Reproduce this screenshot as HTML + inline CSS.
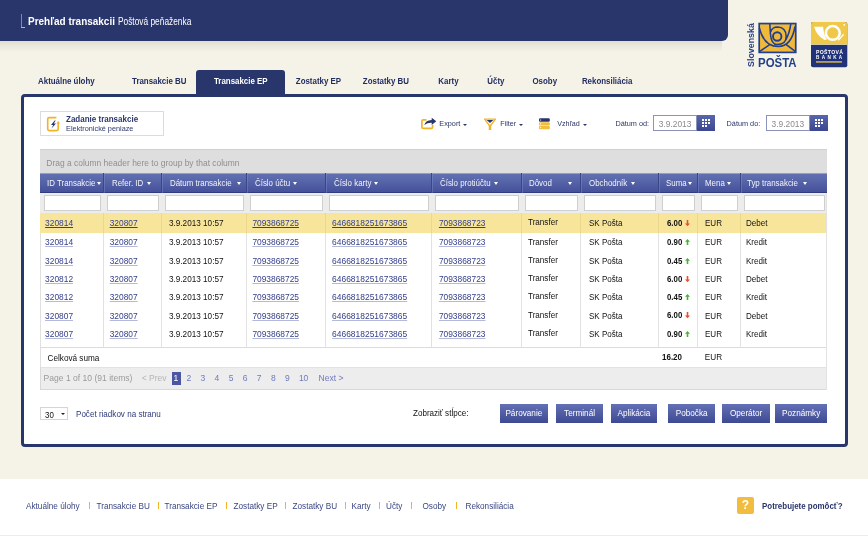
<!DOCTYPE html>
<html><head><meta charset="utf-8"><style>
*{box-sizing:border-box;margin:0;padding:0}
html,body{width:868px;height:536px;overflow:hidden}
body{background:#f5f2e8;font-family:"Liberation Sans",sans-serif;position:relative;color:#222}
.a{position:absolute;white-space:nowrap}
.tab{position:absolute;top:70px;height:25px;padding-top:6px;line-height:12px;font-size:8.1px;font-weight:bold;color:#222d60;text-align:center}
.tab.act{background:#29366b;color:#fff;border-radius:3px 3px 0 0}
.car{position:absolute;width:0;height:0;border-left:2.7px solid transparent;border-right:2.7px solid transparent;border-top:3.1px solid #fff}
.fin{position:absolute;top:195.2px;height:15.6px;background:#fff;border:1px solid #cfcfcf}
.vl{position:absolute;width:1px;background:#e2e2e2}
u{text-decoration:underline;text-decoration-color:#b3b9d6;text-decoration-thickness:1.25px;text-underline-offset:1px}
.btn{position:absolute;top:404.1px;height:18.8px;padding-top:4px;line-height:12px;background:linear-gradient(#6470b4,#3d4a92);color:#fff;font-size:8.2px;text-align:center}
.fl{position:absolute;top:501px;line-height:12px;font-size:8.2px;color:#3a4682}
.fs{position:absolute;top:501.6px;width:1px;height:7.4px;background:#f0b429}
</style></head>
<body><div id="root" style="position:absolute;left:0;top:0;width:868px;height:536px;overflow:hidden;will-change:transform">
<div class="a" style="left:0;top:41px;width:722px;height:11px;background:linear-gradient(rgba(95,90,65,0.14),rgba(95,90,65,0.07) 40%,rgba(95,90,65,0))"></div>
<div class="a" style="left:0;top:0;width:728px;height:41px;background:#29366b;border-bottom-right-radius:6px;"></div>
<div class="a" style="left:21px;top:14px;width:1.3px;height:14px;background:#8a8a80"></div>
<div class="a" style="left:21px;top:27.2px;width:4px;height:1.2px;background:#e8b830"></div>
<div class="a" style="left:27.7px;top:14.85px;line-height:12px;font-size:10.75px;font-weight:bold;color:#fff;transform-origin:0 50%;transform:scaleX(0.927)">Prehľad transakcii</div>
<div class="a" style="left:117.9px;top:14.85px;line-height:12px;font-size:10.75px;color:#fff;transform-origin:0 50%;transform:scaleX(0.776)">Poštová peňaženka</div>
<div class="tab" style="left:23px;width:86px;font-size:8.2px"><span style="display:inline-block;transform:scaleX(0.965)">Aktuálne úlohy</span></div>
<div class="tab" style="left:116px;width:86px;font-size:8.2px"><span style="display:inline-block;transform:scaleX(0.965)">Transakcie BU</span></div>
<div class="tab act" style="left:196px;width:89px;font-size:8.2px"><span style="display:inline-block;transform:scaleX(0.965)">Transakcie EP</span></div>
<div class="tab" style="left:285px;width:67px;font-size:8.2px"><span style="display:inline-block;transform:scaleX(0.965)">Zostatky EP</span></div>
<div class="tab" style="left:352px;width:68px;font-size:8.2px"><span style="display:inline-block;transform:scaleX(0.965)">Zostatky BU</span></div>
<div class="tab" style="left:428px;width:41px;font-size:8.2px"><span style="display:inline-block;transform:scaleX(0.965)">Karty</span></div>
<div class="tab" style="left:476px;width:40px;font-size:8.2px"><span style="display:inline-block;transform:scaleX(0.965)">Účty</span></div>
<div class="tab" style="left:524px;width:41px;font-size:8.2px"><span style="display:inline-block;transform:scaleX(0.965)">Osoby</span></div>
<div class="tab" style="left:574px;width:67px;font-size:8.2px"><span style="display:inline-block;transform:scaleX(0.965)">Rekonsiliácia</span></div>
<div class="a" style="left:21px;top:94px;width:827px;height:353px;border:3px solid #29366b;border-radius:4px;background:#fff"></div>
<div class="a" style="left:40.3px;top:111.1px;width:123.5px;height:25.3px;border:1px solid #dcdcdc;background:#fff"></div>
<svg class="a" style="left:45px;top:114.5px" width="18" height="18" viewBox="0 0 18 18">
<path d="M11.4 2.6 H4.2 Q2.7 2.6 2.7 4.1 V14.1 Q2.7 15.6 4.2 15.6 H11.7 Q13.2 15.6 13.2 14.1 V8" fill="none" stroke="#f0b429" stroke-width="1.6"/>
<path d="M13.2 5.9 L15.1 8.6 H11.3 Z" fill="#f0b429"/>
<path d="M9.7 5.5 L6 10.1 H8.2 L6.5 13.4 L11 8.6 H8.8 L10.7 5.5 Z" fill="#29366b"/>
</svg>
<div class="a" style="left:66.10px;top:114.00px;line-height:12px;font-size:8.2px;color:#29366b;font-weight:bold;transform-origin:0 50%;transform:scaleX(0.978);">Zadanie transakcie</div>
<div class="a" style="left:66.10px;top:123.00px;line-height:12px;font-size:7.3px;color:#2c3870;">Elektronické peniaze</div>
<svg class="a" style="left:419.5px;top:117px" width="18" height="13" viewBox="0 0 18 13">
<path d="M6.5 2.85 H3.3 Q1.85 2.85 1.85 4.3 V9.9 Q1.85 11.35 3.3 11.35 H11.2 Q12.65 11.35 12.65 9.9 V7.9" fill="none" stroke="#f0b429" stroke-width="1.7"/>
<path d="M4.3 7.9 Q5.5 3.1 11.7 2.9 V0.8 L16.3 4.3 L11.7 7.9 V5.7 Q7.5 5.5 4.3 7.9 Z" fill="#29366b"/>
</svg>
<div class="a" style="left:439.30px;top:118.00px;line-height:12px;font-size:7.3px;color:#2a3568;">Export</div>
<div class="car" style="left:463px;top:123.5px;border-top-color:#2a3568;border-left-width:2px;border-right-width:2px;border-top-width:2.5px"></div>
<svg class="a" style="left:483px;top:117.5px" width="14" height="13" viewBox="0 0 14 13">
<path d="M1.6 1.1 H12.4 L7 8.2 Z" fill="#fff" stroke="#f0b429" stroke-width="1.45" stroke-linejoin="round"/>
<path d="M7 7.2 V12" stroke="#f0b429" stroke-width="2.5"/>
<path d="M3.6 1.9 H10.4 L7 4.9 Z" fill="#29366b"/>
</svg>
<div class="a" style="left:500.30px;top:118.00px;line-height:12px;font-size:7.1px;color:#2a3568;">Filter</div>
<div class="car" style="left:518.8px;top:123.5px;border-top-color:#2a3568;border-left-width:2px;border-right-width:2px;border-top-width:2.5px"></div>
<svg class="a" style="left:539px;top:118px" width="11" height="12" viewBox="0 0 11 12">
<rect x="0" y="0.2" width="10.8" height="3.5" rx="1.2" fill="#26336e"/>
<rect x="0" y="4.3" width="10.8" height="3.2" rx="0.8" fill="#f1bd3f"/>
<rect x="0" y="8.0" width="10.8" height="3.2" rx="0.8" fill="#f1bd3f"/>
<circle cx="1.6" cy="2" r="0.6" fill="#fff"/><circle cx="1.6" cy="5.9" r="0.6" fill="#fff"/><circle cx="1.6" cy="9.6" r="0.6" fill="#fff"/>
</svg>
<div class="a" style="left:557.20px;top:118.00px;line-height:12px;font-size:7.2px;color:#2a3568;">Vzhľad</div>
<div class="car" style="left:583px;top:123.5px;border-top-color:#2a3568;border-left-width:2px;border-right-width:2px;border-top-width:2.5px"></div>
<div class="a" style="left:615.40px;top:118.00px;line-height:12px;font-size:7.3px;color:#2a3568;">Dátum od:</div>
<div class="a" style="left:653.4px;top:114.9px;width:44px;height:16.3px;border:1px solid #8c93b8;background:#fff"></div>
<div class="a" style="left:658.80px;top:118.00px;line-height:12px;font-size:8.4px;color:#8a8a8a;">3.9.2013</div>
<div class="a" style="left:697.4px;top:114.9px;width:17.5px;height:16.3px;background:linear-gradient(#5866ad,#3b4790)"></div>
<svg class="a" style="left:702.20px;top:119.10px" width="8" height="8" viewBox="0 0 8 8"><rect x="0.0" y="0.0" width="2" height="2" fill="#fff"/><rect x="3.0" y="0.0" width="2" height="2" fill="#fff"/><rect x="6.0" y="0.0" width="2" height="2" fill="#fff"/><rect x="0.0" y="3.0" width="2" height="2" fill="#fff"/><rect x="3.0" y="3.0" width="2" height="2" fill="#fff"/><rect x="6.0" y="3.0" width="2" height="2" fill="#fff"/><rect x="0.0" y="6.0" width="2" height="2" fill="#fff"/><rect x="3.0" y="6.0" width="2" height="2" fill="#fff"/></svg>
<div class="a" style="left:726.60px;top:118.00px;line-height:12px;font-size:7.3px;color:#2a3568;">Dátum do:</div>
<div class="a" style="left:766.1px;top:114.9px;width:44px;height:16.3px;border:1px solid #8c93b8;background:#fff"></div>
<div class="a" style="left:771.50px;top:118.00px;line-height:12px;font-size:8.4px;color:#8a8a8a;">3.9.2013</div>
<div class="a" style="left:810.1px;top:114.9px;width:17.5px;height:16.3px;background:linear-gradient(#5866ad,#3b4790)"></div>
<svg class="a" style="left:814.90px;top:119.10px" width="8" height="8" viewBox="0 0 8 8"><rect x="0.0" y="0.0" width="2" height="2" fill="#fff"/><rect x="3.0" y="0.0" width="2" height="2" fill="#fff"/><rect x="6.0" y="0.0" width="2" height="2" fill="#fff"/><rect x="0.0" y="3.0" width="2" height="2" fill="#fff"/><rect x="3.0" y="3.0" width="2" height="2" fill="#fff"/><rect x="6.0" y="3.0" width="2" height="2" fill="#fff"/><rect x="0.0" y="6.0" width="2" height="2" fill="#fff"/><rect x="3.0" y="6.0" width="2" height="2" fill="#fff"/></svg>
<div class="a" style="left:40.3px;top:149.3px;width:786.7px;height:24px;background:#dedede;border-top:1px solid #d0d0d0"></div>
<div class="a" style="left:46.30px;top:157.00px;line-height:12px;font-size:8.45px;color:#8f8f8f;">Drag a column header here to group by that column</div>
<div class="a" style="left:40.3px;top:173.2px;width:786.7px;height:19.4px;background:linear-gradient(#6270b3,#45529a);border-top:1px solid #8e9dd2;border-bottom:1px solid #303c82"></div>
<div class="a" style="left:102.90px;top:173.2px;width:1px;height:19.8px;background:#3a4688"></div>
<div class="a" style="left:103.90px;top:173.2px;width:1px;height:19.8px;background:rgba(140,155,215,0.35)"></div>
<div class="a" style="left:160.90px;top:173.2px;width:1px;height:19.8px;background:#3a4688"></div>
<div class="a" style="left:161.90px;top:173.2px;width:1px;height:19.8px;background:rgba(140,155,215,0.35)"></div>
<div class="a" style="left:245.90px;top:173.2px;width:1px;height:19.8px;background:#3a4688"></div>
<div class="a" style="left:246.90px;top:173.2px;width:1px;height:19.8px;background:rgba(140,155,215,0.35)"></div>
<div class="a" style="left:324.90px;top:173.2px;width:1px;height:19.8px;background:#3a4688"></div>
<div class="a" style="left:325.90px;top:173.2px;width:1px;height:19.8px;background:rgba(140,155,215,0.35)"></div>
<div class="a" style="left:431.40px;top:173.2px;width:1px;height:19.8px;background:#3a4688"></div>
<div class="a" style="left:432.40px;top:173.2px;width:1px;height:19.8px;background:rgba(140,155,215,0.35)"></div>
<div class="a" style="left:520.90px;top:173.2px;width:1px;height:19.8px;background:#3a4688"></div>
<div class="a" style="left:521.90px;top:173.2px;width:1px;height:19.8px;background:rgba(140,155,215,0.35)"></div>
<div class="a" style="left:580.00px;top:173.2px;width:1px;height:19.8px;background:#3a4688"></div>
<div class="a" style="left:581.00px;top:173.2px;width:1px;height:19.8px;background:rgba(140,155,215,0.35)"></div>
<div class="a" style="left:658.00px;top:173.2px;width:1px;height:19.8px;background:#3a4688"></div>
<div class="a" style="left:659.00px;top:173.2px;width:1px;height:19.8px;background:rgba(140,155,215,0.35)"></div>
<div class="a" style="left:697.00px;top:173.2px;width:1px;height:19.8px;background:#3a4688"></div>
<div class="a" style="left:698.00px;top:173.2px;width:1px;height:19.8px;background:rgba(140,155,215,0.35)"></div>
<div class="a" style="left:740.00px;top:173.2px;width:1px;height:19.8px;background:#3a4688"></div>
<div class="a" style="left:741.00px;top:173.2px;width:1px;height:19.8px;background:rgba(140,155,215,0.35)"></div>
<div class="a" style="left:46.50px;top:178.00px;line-height:12px;font-size:8.2px;color:#f2f3fa;transform-origin:0 50%;transform:scaleX(0.966);">ID Transakcie</div>
<div class="car" style="left:97.3px;top:182px"></div>
<div class="a" style="left:111.90px;top:178.00px;line-height:12px;font-size:8.2px;color:#f2f3fa;transform-origin:0 50%;transform:scaleX(0.966);">Refer. ID</div>
<div class="car" style="left:146.5px;top:182px"></div>
<div class="a" style="left:170.00px;top:178.00px;line-height:12px;font-size:8.2px;color:#f2f3fa;transform-origin:0 50%;transform:scaleX(0.966);">Dátum transakcie</div>
<div class="car" style="left:236.5px;top:182px"></div>
<div class="a" style="left:254.50px;top:178.00px;line-height:12px;font-size:8.2px;color:#f2f3fa;transform-origin:0 50%;transform:scaleX(0.966);">Číslo účtu</div>
<div class="car" style="left:292.7px;top:182px"></div>
<div class="a" style="left:333.90px;top:178.00px;line-height:12px;font-size:8.2px;color:#f2f3fa;transform-origin:0 50%;transform:scaleX(0.966);">Číslo karty</div>
<div class="car" style="left:374.3px;top:182px"></div>
<div class="a" style="left:440.00px;top:178.00px;line-height:12px;font-size:8.2px;color:#f2f3fa;transform-origin:0 50%;transform:scaleX(0.966);">Číslo protiúčtu</div>
<div class="car" style="left:494.4px;top:182px"></div>
<div class="a" style="left:528.80px;top:178.00px;line-height:12px;font-size:8.2px;color:#f2f3fa;transform-origin:0 50%;transform:scaleX(0.966);">Dôvod</div>
<div class="car" style="left:568.2px;top:182px"></div>
<div class="a" style="left:589.30px;top:178.00px;line-height:12px;font-size:8.2px;color:#f2f3fa;transform-origin:0 50%;transform:scaleX(0.966);">Obchodník</div>
<div class="car" style="left:631.1px;top:182px"></div>
<div class="a" style="left:666.10px;top:178.00px;line-height:12px;font-size:8.2px;color:#f2f3fa;transform-origin:0 50%;transform:scaleX(0.966);">Suma</div>
<div class="car" style="left:688.4px;top:182px"></div>
<div class="a" style="left:704.60px;top:178.00px;line-height:12px;font-size:8.2px;color:#f2f3fa;transform-origin:0 50%;transform:scaleX(0.966);">Mena</div>
<div class="car" style="left:727.1px;top:182px"></div>
<div class="a" style="left:747.20px;top:178.00px;line-height:12px;font-size:8.2px;color:#f2f3fa;transform-origin:0 50%;transform:scaleX(0.966);">Typ transakcie</div>
<div class="car" style="left:802.6px;top:182px"></div>
<div class="a" style="left:40.3px;top:193px;width:786.7px;height:20px;background:#ececec"></div>
<div class="fin" style="left:44.20px;width:56.70px"></div>
<div class="fin" style="left:106.90px;width:52.00px"></div>
<div class="fin" style="left:164.90px;width:79.00px"></div>
<div class="fin" style="left:249.90px;width:73.00px"></div>
<div class="fin" style="left:328.90px;width:100.50px"></div>
<div class="fin" style="left:435.40px;width:83.50px"></div>
<div class="fin" style="left:524.90px;width:53.10px"></div>
<div class="fin" style="left:584.00px;width:72.00px"></div>
<div class="fin" style="left:662.00px;width:33.00px"></div>
<div class="fin" style="left:701.00px;width:37.00px"></div>
<div class="fin" style="left:744.00px;width:80.50px"></div>
<div class="a" style="left:40.3px;top:213px;width:786.7px;height:134.2px;background:#fff;border-left:1px solid #e0e0e0"></div>
<div class="a" style="left:40.3px;top:213px;width:786.7px;height:19.5px;background:#f8e59c"></div>
<div class="vl" style="left:102.90px;top:213px;height:134.2px"></div>
<div class="vl" style="left:102.90px;top:213px;height:19.5px;background:#ecd88a"></div>
<div class="vl" style="left:160.90px;top:213px;height:134.2px"></div>
<div class="vl" style="left:160.90px;top:213px;height:19.5px;background:#ecd88a"></div>
<div class="vl" style="left:245.90px;top:213px;height:134.2px"></div>
<div class="vl" style="left:245.90px;top:213px;height:19.5px;background:#ecd88a"></div>
<div class="vl" style="left:324.90px;top:213px;height:134.2px"></div>
<div class="vl" style="left:324.90px;top:213px;height:19.5px;background:#ecd88a"></div>
<div class="vl" style="left:431.40px;top:213px;height:134.2px"></div>
<div class="vl" style="left:431.40px;top:213px;height:19.5px;background:#ecd88a"></div>
<div class="vl" style="left:520.90px;top:213px;height:134.2px"></div>
<div class="vl" style="left:520.90px;top:213px;height:19.5px;background:#ecd88a"></div>
<div class="vl" style="left:580.00px;top:213px;height:134.2px"></div>
<div class="vl" style="left:580.00px;top:213px;height:19.5px;background:#ecd88a"></div>
<div class="vl" style="left:658.00px;top:213px;height:134.2px"></div>
<div class="vl" style="left:658.00px;top:213px;height:19.5px;background:#ecd88a"></div>
<div class="vl" style="left:697.00px;top:213px;height:134.2px"></div>
<div class="vl" style="left:697.00px;top:213px;height:19.5px;background:#ecd88a"></div>
<div class="vl" style="left:740.00px;top:213px;height:134.2px"></div>
<div class="vl" style="left:740.00px;top:213px;height:19.5px;background:#ecd88a"></div>
<div class="a" style="left:40.3px;top:346.7px;width:786.7px;height:1px;background:#dcdcdc"></div>
<div class="a" style="left:45.10px;top:217.00px;line-height:12px;font-size:8.4px;color:#36418a;"><u style="text-decoration-color:#3b4478">320814</u></div>
<div class="a" style="left:109.70px;top:217.00px;line-height:12px;font-size:8.4px;color:#36418a;"><u style="text-decoration-color:#3b4478">320807</u></div>
<div class="a" style="left:168.80px;top:217.00px;line-height:12px;font-size:8.3px;color:#111;transform-origin:0 50%;transform:scaleX(0.984);">3.9.2013 10:57</div>
<div class="a" style="left:252.40px;top:217.00px;line-height:12px;font-size:8.4px;color:#36418a;"><u style="text-decoration-color:#3b4478">7093868725</u></div>
<div class="a" style="left:332.10px;top:217.00px;line-height:12px;font-size:8.45px;color:#36418a;"><u style="text-decoration-color:#3b4478">6466818251673865</u></div>
<div class="a" style="left:438.90px;top:217.00px;line-height:12px;font-size:8.4px;color:#36418a;"><u style="text-decoration-color:#3b4478">7093868723</u></div>
<div class="a" style="left:527.60px;top:216.00px;line-height:12px;font-size:8.3px;color:#111;transform-origin:0 50%;transform:scaleX(0.977);">Transfer</div>
<div class="a" style="left:589.20px;top:217.00px;line-height:12px;font-size:8.3px;color:#111;transform-origin:0 50%;transform:scaleX(0.965);">SK Pošta</div>
<div class="a" style="left:666.50px;top:218.00px;line-height:12px;font-size:8.15px;color:#111;font-weight:bold;transform-origin:0 50%;transform:scaleX(0.965);">6.00</div>
<svg class="a" style="left:685.1px;top:219.90px" width="5" height="6.2" viewBox="0 0 5 6.2"><path d="M1.7 0 H3.3 V3.4 H5 L2.5 6.2 L0 3.4 H1.7 Z" fill="#e0532b"/></svg>
<div class="a" style="left:704.60px;top:217.00px;line-height:12px;font-size:8.3px;color:#111;transform-origin:0 50%;transform:scaleX(0.970);">EUR</div>
<div class="a" style="left:746.00px;top:217.00px;line-height:12px;font-size:8.3px;color:#111;transform-origin:0 50%;transform:scaleX(0.970);">Debet</div>
<div class="a" style="left:45.10px;top:236.00px;line-height:12px;font-size:8.4px;color:#36418a;"><u>320814</u></div>
<div class="a" style="left:109.70px;top:236.00px;line-height:12px;font-size:8.4px;color:#36418a;"><u>320807</u></div>
<div class="a" style="left:168.80px;top:236.00px;line-height:12px;font-size:8.3px;color:#111;transform-origin:0 50%;transform:scaleX(0.984);">3.9.2013 10:57</div>
<div class="a" style="left:252.40px;top:236.00px;line-height:12px;font-size:8.4px;color:#36418a;"><u>7093868725</u></div>
<div class="a" style="left:332.10px;top:236.00px;line-height:12px;font-size:8.45px;color:#36418a;"><u>6466818251673865</u></div>
<div class="a" style="left:438.90px;top:236.00px;line-height:12px;font-size:8.4px;color:#36418a;"><u>7093868723</u></div>
<div class="a" style="left:527.60px;top:236.00px;line-height:12px;font-size:8.3px;color:#111;transform-origin:0 50%;transform:scaleX(0.977);">Transfer</div>
<div class="a" style="left:589.20px;top:236.00px;line-height:12px;font-size:8.3px;color:#111;transform-origin:0 50%;transform:scaleX(0.965);">SK Pošta</div>
<div class="a" style="left:666.50px;top:237.00px;line-height:12px;font-size:8.15px;color:#111;font-weight:bold;transform-origin:0 50%;transform:scaleX(0.965);">0.90</div>
<svg class="a" style="left:685.1px;top:239.30px" width="5" height="6.2" viewBox="0 0 5 6.2"><path d="M1.7 6.2 H3.3 V2.8 H5 L2.5 0 L0 2.8 H1.7 Z" fill="#4caf3a"/></svg>
<div class="a" style="left:704.60px;top:236.00px;line-height:12px;font-size:8.3px;color:#111;transform-origin:0 50%;transform:scaleX(0.970);">EUR</div>
<div class="a" style="left:746.00px;top:236.00px;line-height:12px;font-size:8.3px;color:#111;transform-origin:0 50%;transform:scaleX(0.970);">Kredit</div>
<div class="a" style="left:45.10px;top:255.00px;line-height:12px;font-size:8.4px;color:#36418a;"><u>320814</u></div>
<div class="a" style="left:109.70px;top:255.00px;line-height:12px;font-size:8.4px;color:#36418a;"><u>320807</u></div>
<div class="a" style="left:168.80px;top:255.00px;line-height:12px;font-size:8.3px;color:#111;transform-origin:0 50%;transform:scaleX(0.984);">3.9.2013 10:57</div>
<div class="a" style="left:252.40px;top:255.00px;line-height:12px;font-size:8.4px;color:#36418a;"><u>7093868725</u></div>
<div class="a" style="left:332.10px;top:255.00px;line-height:12px;font-size:8.45px;color:#36418a;"><u>6466818251673865</u></div>
<div class="a" style="left:438.90px;top:255.00px;line-height:12px;font-size:8.4px;color:#36418a;"><u>7093868723</u></div>
<div class="a" style="left:527.60px;top:254.00px;line-height:12px;font-size:8.3px;color:#111;transform-origin:0 50%;transform:scaleX(0.977);">Transfer</div>
<div class="a" style="left:589.20px;top:255.00px;line-height:12px;font-size:8.3px;color:#111;transform-origin:0 50%;transform:scaleX(0.965);">SK Pošta</div>
<div class="a" style="left:666.50px;top:256.00px;line-height:12px;font-size:8.15px;color:#111;font-weight:bold;transform-origin:0 50%;transform:scaleX(0.965);">0.45</div>
<svg class="a" style="left:685.1px;top:257.50px" width="5" height="6.2" viewBox="0 0 5 6.2"><path d="M1.7 6.2 H3.3 V2.8 H5 L2.5 0 L0 2.8 H1.7 Z" fill="#4caf3a"/></svg>
<div class="a" style="left:704.60px;top:255.00px;line-height:12px;font-size:8.3px;color:#111;transform-origin:0 50%;transform:scaleX(0.970);">EUR</div>
<div class="a" style="left:746.00px;top:255.00px;line-height:12px;font-size:8.3px;color:#111;transform-origin:0 50%;transform:scaleX(0.970);">Kredit</div>
<div class="a" style="left:45.10px;top:273.00px;line-height:12px;font-size:8.4px;color:#36418a;"><u>320812</u></div>
<div class="a" style="left:109.70px;top:273.00px;line-height:12px;font-size:8.4px;color:#36418a;"><u>320807</u></div>
<div class="a" style="left:168.80px;top:273.00px;line-height:12px;font-size:8.3px;color:#111;transform-origin:0 50%;transform:scaleX(0.984);">3.9.2013 10:57</div>
<div class="a" style="left:252.40px;top:273.00px;line-height:12px;font-size:8.4px;color:#36418a;"><u>7093868725</u></div>
<div class="a" style="left:332.10px;top:273.00px;line-height:12px;font-size:8.45px;color:#36418a;"><u>6466818251673865</u></div>
<div class="a" style="left:438.90px;top:273.00px;line-height:12px;font-size:8.4px;color:#36418a;"><u>7093868723</u></div>
<div class="a" style="left:527.60px;top:272.00px;line-height:12px;font-size:8.3px;color:#111;transform-origin:0 50%;transform:scaleX(0.977);">Transfer</div>
<div class="a" style="left:589.20px;top:273.00px;line-height:12px;font-size:8.3px;color:#111;transform-origin:0 50%;transform:scaleX(0.965);">SK Pošta</div>
<div class="a" style="left:666.50px;top:274.00px;line-height:12px;font-size:8.15px;color:#111;font-weight:bold;transform-origin:0 50%;transform:scaleX(0.965);">6.00</div>
<svg class="a" style="left:685.1px;top:275.70px" width="5" height="6.2" viewBox="0 0 5 6.2"><path d="M1.7 0 H3.3 V3.4 H5 L2.5 6.2 L0 3.4 H1.7 Z" fill="#e0532b"/></svg>
<div class="a" style="left:704.60px;top:273.00px;line-height:12px;font-size:8.3px;color:#111;transform-origin:0 50%;transform:scaleX(0.970);">EUR</div>
<div class="a" style="left:746.00px;top:273.00px;line-height:12px;font-size:8.3px;color:#111;transform-origin:0 50%;transform:scaleX(0.970);">Debet</div>
<div class="a" style="left:45.10px;top:291.00px;line-height:12px;font-size:8.4px;color:#36418a;"><u>320812</u></div>
<div class="a" style="left:109.70px;top:291.00px;line-height:12px;font-size:8.4px;color:#36418a;"><u>320807</u></div>
<div class="a" style="left:168.80px;top:291.00px;line-height:12px;font-size:8.3px;color:#111;transform-origin:0 50%;transform:scaleX(0.984);">3.9.2013 10:57</div>
<div class="a" style="left:252.40px;top:291.00px;line-height:12px;font-size:8.4px;color:#36418a;"><u>7093868725</u></div>
<div class="a" style="left:332.10px;top:291.00px;line-height:12px;font-size:8.45px;color:#36418a;"><u>6466818251673865</u></div>
<div class="a" style="left:438.90px;top:291.00px;line-height:12px;font-size:8.4px;color:#36418a;"><u>7093868723</u></div>
<div class="a" style="left:527.60px;top:290.00px;line-height:12px;font-size:8.3px;color:#111;transform-origin:0 50%;transform:scaleX(0.977);">Transfer</div>
<div class="a" style="left:589.20px;top:291.00px;line-height:12px;font-size:8.3px;color:#111;transform-origin:0 50%;transform:scaleX(0.965);">SK Pošta</div>
<div class="a" style="left:666.50px;top:292.00px;line-height:12px;font-size:8.15px;color:#111;font-weight:bold;transform-origin:0 50%;transform:scaleX(0.965);">0.45</div>
<svg class="a" style="left:685.1px;top:293.90px" width="5" height="6.2" viewBox="0 0 5 6.2"><path d="M1.7 6.2 H3.3 V2.8 H5 L2.5 0 L0 2.8 H1.7 Z" fill="#4caf3a"/></svg>
<div class="a" style="left:704.60px;top:291.00px;line-height:12px;font-size:8.3px;color:#111;transform-origin:0 50%;transform:scaleX(0.970);">EUR</div>
<div class="a" style="left:746.00px;top:291.00px;line-height:12px;font-size:8.3px;color:#111;transform-origin:0 50%;transform:scaleX(0.970);">Kredit</div>
<div class="a" style="left:45.10px;top:310.00px;line-height:12px;font-size:8.4px;color:#36418a;"><u>320807</u></div>
<div class="a" style="left:109.70px;top:310.00px;line-height:12px;font-size:8.4px;color:#36418a;"><u>320807</u></div>
<div class="a" style="left:168.80px;top:310.00px;line-height:12px;font-size:8.3px;color:#111;transform-origin:0 50%;transform:scaleX(0.984);">3.9.2013 10:57</div>
<div class="a" style="left:252.40px;top:310.00px;line-height:12px;font-size:8.4px;color:#36418a;"><u>7093868725</u></div>
<div class="a" style="left:332.10px;top:310.00px;line-height:12px;font-size:8.45px;color:#36418a;"><u>6466818251673865</u></div>
<div class="a" style="left:438.90px;top:310.00px;line-height:12px;font-size:8.4px;color:#36418a;"><u>7093868723</u></div>
<div class="a" style="left:527.60px;top:309.00px;line-height:12px;font-size:8.3px;color:#111;transform-origin:0 50%;transform:scaleX(0.977);">Transfer</div>
<div class="a" style="left:589.20px;top:310.00px;line-height:12px;font-size:8.3px;color:#111;transform-origin:0 50%;transform:scaleX(0.965);">SK Pošta</div>
<div class="a" style="left:666.50px;top:310.00px;line-height:12px;font-size:8.15px;color:#111;font-weight:bold;transform-origin:0 50%;transform:scaleX(0.965);">6.00</div>
<svg class="a" style="left:685.1px;top:312.40px" width="5" height="6.2" viewBox="0 0 5 6.2"><path d="M1.7 0 H3.3 V3.4 H5 L2.5 6.2 L0 3.4 H1.7 Z" fill="#e0532b"/></svg>
<div class="a" style="left:704.60px;top:310.00px;line-height:12px;font-size:8.3px;color:#111;transform-origin:0 50%;transform:scaleX(0.970);">EUR</div>
<div class="a" style="left:746.00px;top:310.00px;line-height:12px;font-size:8.3px;color:#111;transform-origin:0 50%;transform:scaleX(0.970);">Debet</div>
<div class="a" style="left:45.10px;top:328.00px;line-height:12px;font-size:8.4px;color:#36418a;"><u>320807</u></div>
<div class="a" style="left:109.70px;top:328.00px;line-height:12px;font-size:8.4px;color:#36418a;"><u>320807</u></div>
<div class="a" style="left:168.80px;top:328.00px;line-height:12px;font-size:8.3px;color:#111;transform-origin:0 50%;transform:scaleX(0.984);">3.9.2013 10:57</div>
<div class="a" style="left:252.40px;top:328.00px;line-height:12px;font-size:8.4px;color:#36418a;"><u>7093868725</u></div>
<div class="a" style="left:332.10px;top:328.00px;line-height:12px;font-size:8.45px;color:#36418a;"><u>6466818251673865</u></div>
<div class="a" style="left:438.90px;top:328.00px;line-height:12px;font-size:8.4px;color:#36418a;"><u>7093868723</u></div>
<div class="a" style="left:527.60px;top:327.00px;line-height:12px;font-size:8.3px;color:#111;transform-origin:0 50%;transform:scaleX(0.977);">Transfer</div>
<div class="a" style="left:589.20px;top:328.00px;line-height:12px;font-size:8.3px;color:#111;transform-origin:0 50%;transform:scaleX(0.965);">SK Pošta</div>
<div class="a" style="left:666.50px;top:329.00px;line-height:12px;font-size:8.15px;color:#111;font-weight:bold;transform-origin:0 50%;transform:scaleX(0.965);">0.90</div>
<svg class="a" style="left:685.1px;top:330.70px" width="5" height="6.2" viewBox="0 0 5 6.2"><path d="M1.7 6.2 H3.3 V2.8 H5 L2.5 0 L0 2.8 H1.7 Z" fill="#4caf3a"/></svg>
<div class="a" style="left:704.60px;top:328.00px;line-height:12px;font-size:8.3px;color:#111;transform-origin:0 50%;transform:scaleX(0.970);">EUR</div>
<div class="a" style="left:746.00px;top:328.00px;line-height:12px;font-size:8.3px;color:#111;transform-origin:0 50%;transform:scaleX(0.970);">Kredit</div>
<div class="a" style="left:40.3px;top:347.2px;width:786.7px;height:19.8px;background:#fff;border-left:1px solid #e0e0e0"></div>
<div class="a" style="left:40.3px;top:346.7px;width:786.7px;height:1px;background:#dcdcdc"></div>
<div class="a" style="left:47.50px;top:353.00px;line-height:12px;font-size:8.2px;color:#111;">Celková suma</div>
<div class="a" style="left:662.20px;top:352.00px;line-height:12px;font-size:8.2px;color:#111;font-weight:bold;transform-origin:0 50%;transform:scaleX(0.975);">16.20</div>
<div class="a" style="left:704.80px;top:352.00px;line-height:12px;font-size:8.2px;color:#111;">EUR</div>
<div class="a" style="left:40.3px;top:367px;width:786.7px;height:22.5px;background:#ededed;border-top:1px solid #e2e2e2;border-bottom:1px solid #d8d8d8;border-left:1px solid #d8d8d8"></div>
<div class="a" style="left:43.60px;top:372.00px;line-height:12px;font-size:8.55px;color:#9a9a9a;">Page 1 of 10 (91 items)</div>
<div class="a" style="left:141.80px;top:372.00px;line-height:12px;font-size:8.5px;color:#b5b5b5;">&lt; Prev</div>
<div class="a" style="left:172px;top:372px;width:8.7px;height:12.9px;background:#4a56a2"></div>
<div class="a" style="left:173.60px;top:372.00px;line-height:12px;font-size:8.5px;color:#fff;">1</div>
<div class="a" style="left:186.40px;top:372.00px;line-height:12px;font-size:8.5px;color:#6f7bbd;">2</div>
<div class="a" style="left:200.48px;top:372.00px;line-height:12px;font-size:8.5px;color:#6f7bbd;">3</div>
<div class="a" style="left:214.56px;top:372.00px;line-height:12px;font-size:8.5px;color:#6f7bbd;">4</div>
<div class="a" style="left:228.64px;top:372.00px;line-height:12px;font-size:8.5px;color:#6f7bbd;">5</div>
<div class="a" style="left:242.72px;top:372.00px;line-height:12px;font-size:8.5px;color:#6f7bbd;">6</div>
<div class="a" style="left:256.80px;top:372.00px;line-height:12px;font-size:8.5px;color:#6f7bbd;">7</div>
<div class="a" style="left:270.88px;top:372.00px;line-height:12px;font-size:8.5px;color:#6f7bbd;">8</div>
<div class="a" style="left:284.96px;top:372.00px;line-height:12px;font-size:8.5px;color:#6f7bbd;">9</div>
<div class="a" style="left:298.90px;top:372.00px;line-height:12px;font-size:8.5px;color:#6f7bbd;">10</div>
<div class="a" style="left:318.50px;top:372.00px;line-height:12px;font-size:8.6px;color:#6f7bbd;">Next &gt;</div>
<div class="a" style="left:826.3px;top:193px;width:1px;height:196.5px;background:#e2e2e2"></div>
<div class="a" style="left:40.3px;top:407.4px;width:28.1px;height:13px;border:1px solid #d5d5d5;background:#fff"></div>
<div class="a" style="left:44.50px;top:409.00px;line-height:12px;font-size:8.6px;color:#111;transform-origin:0 50%;transform:scaleX(0.920);">30</div>
<div class="car" style="left:60.8px;top:413.2px;border-top-color:#222;border-left-width:2.2px;border-right-width:2.2px;border-top-width:2.3px"></div>
<div class="a" style="left:75.80px;top:409.00px;line-height:12px;font-size:8.2px;color:#2e3a78;transform-origin:0 50%;transform:scaleX(0.986);">Počet riadkov na stranu</div>
<div class="a" style="left:413.40px;top:408.00px;line-height:12px;font-size:8.2px;color:#111;transform-origin:0 50%;transform:scaleX(0.984);">Zobraziť stĺpce:</div>
<div class="btn" style="left:500.1px;width:47.5px">Párovanie</div>
<div class="btn" style="left:555.9px;width:47.4px">Terminál</div>
<div class="btn" style="left:611px;width:45.8px">Aplikácia</div>
<div class="btn" style="left:668px;width:47.4px">Pobočka</div>
<div class="btn" style="left:722.4px;width:47.4px">Operátor</div>
<div class="btn" style="left:775px;width:52.4px">Poznámky</div>
<div class="a" style="left:0;top:478.9px;width:868px;height:57.1px;background:#fff;border-bottom:1.4px solid #ececec"></div>
<div class="fl" style="left:26px">Aktuálne úlohy</div>
<div class="fl" style="left:96.5px">Transakcie BU</div>
<div class="fl" style="left:164.5px">Transakcie EP</div>
<div class="fl" style="left:233.5px">Zostatky EP</div>
<div class="fl" style="left:292.5px">Zostatky BU</div>
<div class="fl" style="left:351.5px">Karty</div>
<div class="fl" style="left:386px">Účty</div>
<div class="fl" style="left:422.5px">Osoby</div>
<div class="fl" style="left:465.5px">Rekonsiliácia</div>
<div class="fs" style="left:88.5px"></div>
<div class="fs" style="left:158px"></div>
<div class="fs" style="left:225.5px"></div>
<div class="fs" style="left:285px"></div>
<div class="fs" style="left:344.5px"></div>
<div class="fs" style="left:378.5px"></div>
<div class="fs" style="left:411px"></div>
<div class="fs" style="left:455.5px"></div>
<div class="a" style="left:737px;top:496.5px;width:17px;height:17.5px;background:#f2bd3e;border-radius:2px;color:#fff;font-weight:bold;font-size:12px;line-height:17.5px;text-align:center">?</div>
<div class="a" style="left:762.10px;top:501.00px;line-height:12px;font-size:8.2px;color:#29366b;font-weight:bold;transform-origin:0 50%;transform:scaleX(0.969);">Potrebujete pomôcť?</div>
<svg class="a" style="left:756px;top:20px" width="44" height="36" viewBox="0 0 44 36">
<rect x="3.2" y="3.55" width="36.55" height="28.85" fill="#f0b93a" stroke="#223f8c" stroke-width="1.7"/>
<g fill="none" stroke="#223f8c" stroke-width="1.55">
<path d="M3.4 8 Q8 26.5 22.2 26.5 Q35.5 26.5 39 6.5"/>
<path d="M3.4 31.6 L13.4 24.9 M39.6 31.6 L29.6 24.2"/>
<circle cx="21.2" cy="16.5" r="4.2" stroke-width="1.9"/>
<path d="M13.8 3.4 L14.4 13.5 Q15.2 24.6 21 24.6 Q30.2 24.6 30.2 16.5 Q30 7.2 21.5 7 Q16.2 7 14.6 12"/>
<path d="M34.9 3.4 Q33.4 14 29.6 20"/>
</g>
</svg>
<div class="a" style="left:757.6px;top:57px;line-height:12px;font-size:12px;font-weight:bold;color:#22418a;transform-origin:0 50%;transform:scaleX(0.955)">POŠTA</div>
<div class="a" style="left:744.5px;top:66.6px;line-height:12px;font-size:8.9px;font-weight:bold;color:#2a4386;transform-origin:0 0;transform:rotate(-90deg)">Slovenská</div>
<svg class="a" style="left:811px;top:22.2px" width="36.5" height="45.5" viewBox="0 0 36.5 45.5">
<rect x="0" y="0" width="36.3" height="45.3" rx="2" fill="#213279"/>
<path d="M2 0 H34.3 Q36.3 0 36.3 2 V22.2 H0 V2 Q0 0 2 0 Z" fill="#efc84a"/>
<rect x="0" y="22.2" width="36.3" height="0.8" fill="#f6e9b0"/>
<path d="M3.1 4.8 H12.1 Q12.6 12.5 15.9 17.8 L13.4 17.9 Q5.5 13.5 3.1 4.8 Z" fill="#fff"/>
<circle cx="21.8" cy="10.9" r="6.9" fill="none" stroke="#fff" stroke-width="2.5"/>
<path d="M32.7 12.2 L27.2 18.3" fill="none" stroke="#fff" stroke-width="1.3"/>
<circle cx="33.2" cy="2.8" r="0.9" fill="#fff"/>
<text x="5" y="31.6" font-family="Liberation Sans" font-weight="bold" font-size="5.1" fill="#fff" letter-spacing="0.35">POŠTOVÁ</text>
<text x="5" y="37.3" font-family="Liberation Sans" font-weight="bold" font-size="4.6" fill="#fff" letter-spacing="2.4">BANKA</text>
<rect x="5" y="39.3" width="26" height="1.3" fill="#efc84a"/>
</svg>
</div></body></html>
